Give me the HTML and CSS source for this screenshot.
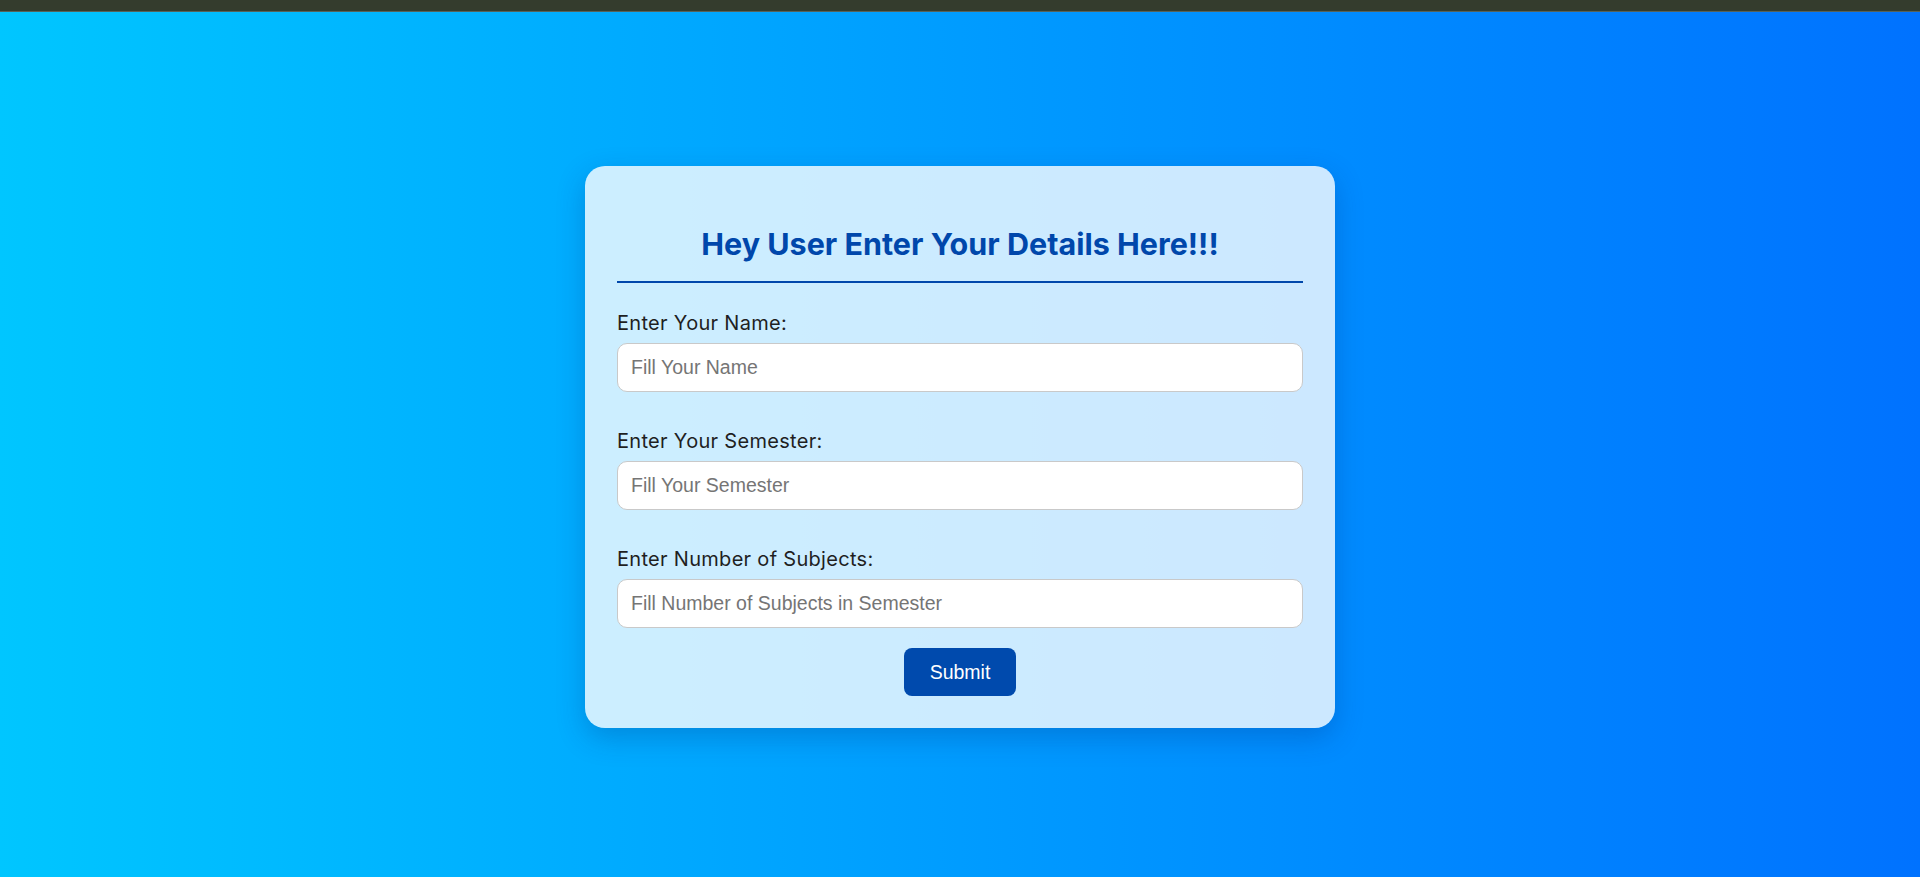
FILE: index.html
```html
<!DOCTYPE html>
<html lang="en">
<head>
<meta charset="utf-8">
<title>Student Details</title>
<link rel="stylesheet" href="styles.css">
</head>
<body>
<div class="topbar"></div>
<main class="stage">
  <form class="card" onsubmit="return false;">
    <h2 class="title">Hey User Enter Your Details Here!!!</h2>
    <div class="fields">
      <div class="field">
        <label for="name">Enter Your Name:</label>
        <input id="name" type="text" placeholder="Fill Your Name">
      </div>
      <div class="field">
        <label for="sem">Enter Your Semester:</label>
        <input id="sem" type="text" placeholder="Fill Your Semester">
      </div>
      <div class="field">
        <label for="subj">Enter Number of Subjects:</label>
        <input id="subj" type="text" placeholder="Fill Number of Subjects in Semester">
      </div>
    </div>
    <div class="actions">
      <button type="submit" class="submit">Submit</button>
    </div>
  </form>
</main>
</body>
</html>
```

FILE: styles.css
```css
html, body {
  margin: 0;
  padding: 0;
  height: 100%;
}

body {
  font-family: Inter, "Open Sans", sans-serif;
  background: linear-gradient(to right, #00c6ff, #0072ff);
  overflow: hidden;
}

.topbar {
  height: 11px;
  background: #343c2d;
  border-bottom: 1px solid #56625a;
}

.stage {
  height: 860px;
  padding-top: 5px;
  display: flex;
  align-items: center;
  justify-content: center;
}

.card {
  width: 686px;
  padding: 32px;
  background: rgba(255, 255, 255, 0.8);
  border-radius: 20px;
  box-shadow: 0 10px 28px rgba(0, 40, 120, 0.25);
}

.title {
  margin: 0;
  padding: 28px 0 19px;
  font-size: 30.5px;
  line-height: 36px;
  font-weight: 700;
  color: #0047ab;
  text-align: center;
  border-bottom: 2px solid #0047ab;
}

.fields {
  margin-top: 28px;
  display: flex;
  flex-direction: column;
  gap: 37px;
}

.field {
  display: flex;
  flex-direction: column;
}

.field label {
  font-size: 20px;
  line-height: 24px;
  letter-spacing: 0.3px;
  color: #1f1f1f;
  margin-bottom: 8px;
}

.field input {
  box-sizing: border-box;
  height: 49px;
  width: 100%;
  padding: 0 13px;
  border: 1px solid #c9c9c9;
  border-radius: 10px;
  background: #fff;
  font-family: "Liberation Sans", Arial, sans-serif;
  font-size: 19.5px;
  color: #222;
  outline: none;
}

.field input::placeholder {
  color: #757575;
}

.actions {
  margin-top: 20px;
  display: flex;
  justify-content: center;
}

.submit {
  width: 112px;
  height: 48px;
  border: none;
  border-radius: 8px;
  background: #004aad;
  color: #fff;
  font-family: "Liberation Sans", Arial, sans-serif;
  font-size: 19.5px;
  cursor: pointer;
}
```
